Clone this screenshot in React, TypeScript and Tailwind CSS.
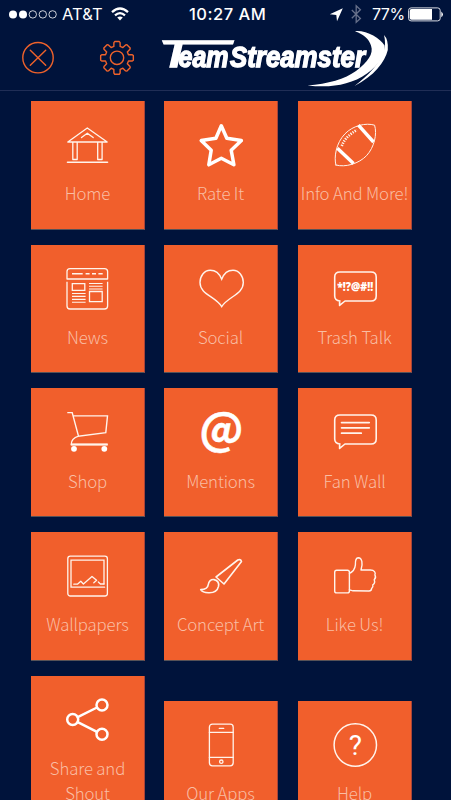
import type { ReactNode } from 'react';

const GLYPH_FONT = "'Noto Sans CJK JP','Noto Sans CJK SC','Open Sans',sans-serif";

const GEAR_TEETH = 8;

function gearPath(cx: number, cy: number) {
  const pts: string[] = [];
  for (let i = 0; i < GEAR_TEETH; i++) {
    const mid = (i * 2 * Math.PI) / GEAR_TEETH - Math.PI / 2;
    const corners = [
      [11.9, -0.27],
      [15.6, -0.2],
      [16.5, -0.14],
      [16.5, 0.14],
      [15.6, 0.2],
      [11.9, 0.27],
    ];
    corners.forEach(([r, d]) => {
      pts.push(`${(cx + r * Math.cos(mid + d)).toFixed(2)} ${(cy + r * Math.sin(mid + d)).toFixed(2)}`);
    });
  }
  return `M${pts.join('L')}Z`;
}

function Icon({ children, width = 1.4 }: { children: ReactNode; width?: number }) {
  return (
    <svg
      className="ml-[33px] block h-12 w-12 shrink-0 overflow-visible"
      viewBox="0 0 48 48"
      fill="none"
      stroke="#fff4ec"
      strokeWidth={width}
      strokeLinejoin="round"
      strokeLinecap="round"
    >
      {children}
    </svg>
  );
}

const bubble =
  'M9 36C5.5 35.6 3.7 33.5 3.7 31V12Q3.7 7 9 7H40Q45.2 7 45.2 12V31Q45.2 36 40 36H14L8.6 40.4V36';

const home = (
  <Icon>
    <path d="M3.8 21 23.3 7 43.2 21ZM17.5 16.6l5.8-4.4 5.9 4.4M8.8 21.5v17h4.4v-17M33.7 21.5v17h4.4v-17" strokeWidth="1.3" />
    <path d="M3.5 41.2H43.5" strokeWidth="1.6" />
  </Icon>
);

const star = (
  <Icon width={3.5}>
    <path stroke="#fff" d="M24.3 4.8 29.8 17.2 44.4 19.6 34.2 29.3 36.9 43.8 24.3 37.3 11.8 43.8 14.2 29.3 4.2 19.6 18.9 17.2Z" />
  </Icon>
);

const football = (
  <Icon width={1}>
    <path d="M4.9 44C2.8 36 5 22 14 12.8 22 4.5 35 1.5 43.6 4.2 46.2 13 43.5 26 35.5 34.7 28 42.5 14.5 46.8 4.9 44Z" />
    <path d="M27.4 4.2 42.5 21M6.4 27.2 22.5 42.4" stroke="#fff" strokeWidth="3.4" strokeLinecap="butt" />
    <path d="M10.8 25Q14 15.5 26 9" strokeWidth="2.6" strokeDasharray="1.3 1.2" strokeLinecap="butt" />
  </Icon>
);

const news = (
  <Icon width={1.3}>
    <path d="M3 14V6.6Q3 3.6 6 3.6H40.5Q43.6 3.6 43.6 6.6V14ZM3 16.7V41Q3 44 6 44H40.5Q43.6 44 43.6 41V16.7" strokeLinecap="butt" />
    <path d="M8 8.8H18.7M21.6 8.8H25.6M28 8.8H32M34.4 8.8H38.7" strokeWidth="1.4" strokeLinecap="butt" />
    <path d="M8.3 18.7H20.8V25.4H8.3ZM25.5 26.5H38.2V36.7H25.5Z" strokeLinejoin="miter" />
    <path d="M25 18.5H38.6M25 21.3H38.6M25 24H38.6M8 28.5H21.6M8 31.4H21.6M8 34.4H21.6M8 37.3H21.6" strokeWidth="1.1" strokeLinecap="butt" />
  </Icon>
);

const heart = (
  <Icon>
    <path
      strokeLinejoin="miter"
      d="M24.7 14.2C22.5 8.7 18 5.3 13.2 5.3 7.2 5.3 3 11 3 17.6 3 29.5 18.5 31.5 24.7 41.6 31 31.5 46.3 29.5 46.3 17.6 46.3 11 42 5.3 36 5.3 31.3 5.3 26.8 8.7 24.7 14.2Z"
    />
  </Icon>
);

const trash = (
  <Icon width={1.6}>
    <path d={bubble} />
    <text x="6.2" y="25.6" textLength="36" lengthAdjust="spacingAndGlyphs" fontSize="12" fontWeight="800" fill="#fff" stroke="none" fontFamily="'Open Sans',sans-serif">
      *!?@#!!
    </text>
  </Icon>
);

const cart = (
  <Icon width={1.4}>
    <path d="M3.3 4.6H8.2L14.5 28.2 41.8 24.6 43.5 7.9H9.2M14.5 28.2C10.5 29.5 7.2 32.5 7.2 36.5H43.6" strokeLinejoin="miter" strokeLinecap="butt" />
    <path d="M7 36.5H43.7" strokeWidth="1.8" strokeLinecap="butt" />
    <circle cx="10" cy="40.8" r="2.9" fill="#fff" stroke="none" />
    <circle cx="40.3" cy="40.8" r="2.9" fill="#fff" stroke="none" />
  </Icon>
);

const mention = (
  <Icon>
    <text x="24.5" y="37.3" textAnchor="middle" fontSize="43.5" fontWeight="700" fill="#fff" stroke="#fff" strokeWidth="0.5" fontFamily={GLYPH_FONT}>
      @
    </text>
  </Icon>
);

const fanWall = (
  <Icon width={1.6}>
    <path d={bubble} />
    <path d="M10.6 14.6H38.2M10.6 19.8H38.2M10.6 25.2H30.2" strokeWidth="1.8" />
  </Icon>
);

const wallpaper = (
  <Icon width={1.3}>
    <rect x="3.8" y="4.2" width="39.6" height="39.8" rx="2.5" />
    <path d="M40 32V8.2H7V35.2H40.6" strokeLinejoin="miter" />
    <path d="M9.8 32.2H13.4L16.8 29.2 19.4 32 28 24.4 32.6 28.3 29.8 30.8M34.3 30 36.4 32H40" />
  </Icon>
);

const brush = (
  <Icon width={1.6}>
    <path d="M19 25 40.8 8Q43.8 6.8 44.5 9.6L27 32Z" />
    <path d="M3.7 37.6C9.5 37.5 11 35.5 11.3 32.5 11.7 29 14 27.2 17 27.6 20.7 28.5 22.2 31 21.5 34.4 20.3 39.5 16 41 11.5 40.8 8 40.6 5 39.8 3.7 37.6Z" />
  </Icon>
);

const like = (
  <Icon>
    <rect x="3.7" y="18.3" width="14.7" height="22.6" rx="2" />
    <path d="M18.4 21.3C22.5 19.5 24 16.5 24.4 12.8 24.2 8 25 5.8 27.2 5.7 31 5.8 32.2 11.5 30 18H39.5C43.3 18 45 20.6 43.9 22.8 45 24.8 44.3 26.8 43.2 27.8 44 29.8 43.2 32 41.8 32.8 42.3 34.5 41.5 35.8 40.6 36.6 40.5 38.3 39.8 39 38 39L22 38.8 18.4 37.8" />
  </Icon>
);

const share = (
  <Icon width={2.5}>
    <g stroke="#fff">
      <circle cx="38" cy="9" r="5.5" />
      <circle cx="8.7" cy="23.6" r="5.5" />
      <circle cx="38" cy="38.3" r="5.5" />
      <path d="M13.7 21.1 33 11.5M13.7 26.1 33 35.8" />
    </g>
  </Icon>
);

const phone = (
  <Icon width={1.3}>
    <rect x="12.4" y="3.2" width="23.8" height="41.6" rx="3" />
    <path d="M12.4 11.4H36.2M12.4 36.4H36.2M22.3 7.4H26.7" />
    <circle cx="24.3" cy="40.7" r="1.7" />
  </Icon>
);

const help = (
  <Icon width={1.5}>
    <circle cx="24.3" cy="24" r="21.2" />
    <text x="24.3" y="34" textAnchor="middle" fontSize="28" fontWeight="400" fill="#fff" stroke="none" fontFamily="Roboto,sans-serif">
      ?
    </text>
  </Icon>
);

const tiles: { label: string; icon: ReactNode }[] = [
  { label: 'Home', icon: home },
  { label: 'Rate It', icon: star },
  { label: 'Info And More!', icon: football },
  { label: 'News', icon: news },
  { label: 'Social', icon: heart },
  { label: 'Trash Talk', icon: trash },
  { label: 'Shop', icon: cart },
  { label: 'Mentions', icon: mention },
  { label: 'Fan Wall', icon: fanWall },
  { label: 'Wallpapers', icon: wallpaper },
  { label: 'Concept Art', icon: brush },
  { label: 'Like Us!', icon: like },
  { label: 'Share and Shout', icon: share },
  { label: 'Our Apps', icon: phone },
  { label: 'Help', icon: help },
];

function StatusBar() {
  return (
    <div className="flex h-7 items-center pl-[9px] font-['Inter','Liberation_Sans',sans-serif] text-[16px] leading-7 text-white">
      <svg className="h-7 w-[50px] shrink-0" viewBox="0 0 50 28" fill="none" stroke="#fff" strokeWidth="0.8">
        <circle cx="4" cy="14.4" r="4" fill="#fff" stroke="none" />
        <circle cx="14" cy="14.4" r="4" fill="#fff" stroke="none" />
        <circle cx="23.8" cy="14.4" r="3.7" />
        <circle cx="33.8" cy="14.4" r="3.7" />
        <circle cx="43.6" cy="14.4" r="3.7" />
      </svg>
      <span className="ml-[3px] w-[41px] whitespace-nowrap text-[16.5px] tracking-[0.1px]">AT&amp;T</span>
      <svg className="ml-[8px] h-7 w-[18px] shrink-0" viewBox="0 0 18 28" fill="none" stroke="#fff" strokeWidth="2.3">
        <path d="M1 12.1Q9 4.9 17 12.1M4 15.3Q9 10.9 14 15.3" />
        <path d="M6.2 17.6Q9 15.4 11.8 17.6L9 20.6Z" fill="#fff" stroke="none" />
      </svg>
      <span className="ml-[60px] w-[78px] whitespace-nowrap text-[16.5px] font-medium tracking-[0.5px]">10:27 AM</span>
      <svg className="ml-[62px] h-7 w-[34px] shrink-0" viewBox="0 0 34 28" fill="none">
        <path d="M.8 14.3 13.8 8.2 8 21.2 7.3 15Z" fill="#fff" />
        <path d="M22.8 10 31.4 18.5 27.2 22.3V5.7L31.4 9.7 22.8 18.2" stroke="#66708a" strokeWidth="1.3" />
      </svg>
      <span className="ml-[9px] w-[35px] whitespace-nowrap tracking-[-0.5px]">77%</span>
      <svg className="ml-[1px] h-7 w-[36px] shrink-0" viewBox="0 0 36 28" fill="none">
        <rect x="0.6" y="7.9" width="31.6" height="13" rx="2.5" stroke="#d9dce4" strokeWidth="1" />
        <path d="M3.5 9H24V19.8H3.5Q1.7 19.8 1.7 18V11Q1.7 9 3.5 9Z" fill="#fff" />
        <path d="M33.3 11.6Q36.6 14.4 33.3 17.2Z" fill="#fff" />
      </svg>
    </div>
  );
}

function Logo() {
  return (
    <svg className="ml-[24px] h-[62px] w-[230px] shrink-0" viewBox="160 28 230 62" fill="#fff">
      <path d="M355 31.2C366 30 380 38 384.5 45.5 385.8 54 379 65 367 73.5 350 85.5 330 88 307.5 85.4 328 84 345 79 356 71 367.5 62 374 54 371 45.5 369 39 364 34.5 355 31.2Z" />
      <path d="M384 35Q388.5 39.5 387.8 50C385 62 374 76 354.5 86 368 76 381 62 384 50Q386 43 384 35Z" />
      <g
        className="drop-shadow-[0.8px_0.6px_0_#5d6b8e]"
        fontFamily="'Liberation Sans',sans-serif"
        fontWeight="700"
        fontStyle="italic"
        stroke="#fff"
        strokeWidth="1.3"
      >
        <path d="M161.8 40.3H234.5L233 44.6H182.6L177.2 67.8H169.2L174.6 44.6H163.6Z" stroke="none" />
        <text x="178.5" y="67.2" fontSize="29.5" textLength="50" lengthAdjust="spacingAndGlyphs">
          eam
        </text>
        <text x="230" y="67.2" fontSize="30" textLength="135" lengthAdjust="spacingAndGlyphs">
          Streamster
        </text>
      </g>
    </svg>
  );
}

export default function App() {
  return (
    <div className="h-[800px] w-[451px] overflow-hidden bg-[#00133b]">
      <StatusBar />
      <header className="flex h-[63px] border-b border-[#202e56] pl-[21px]">
        <svg className="h-[60px] w-[34px] shrink-0" viewBox="21 28 34 60" fill="none" stroke="#ee622b" strokeWidth="1.4" strokeLinecap="round">
          <circle cx="38" cy="57.7" r="15.2" />
          <path d="M30.3 50.2 45.7 65.3M45.7 50.2 30.3 65.3" />
        </svg>
        <svg className="ml-[43px] h-[60px] w-[38px] shrink-0" viewBox="98 28 38 60" fill="none" stroke="#ee622b" strokeWidth="1.4" strokeLinejoin="round">
          <path d={gearPath(117, 57.9)} />
          <circle cx="117" cy="57.8" r="6.7" />
        </svg>
        <Logo />
      </header>
      <main className="grid w-[412px] grid-cols-[133px_134px_114px] items-end gap-y-[15px] pl-[31px] pt-[10px]">
        {tiles.map(({ label, icon }) => (
          <button
            key={label}
            className="flex min-h-[128.7px] w-[114px] flex-col border-b border-r border-b-[#565257] border-r-[#a74439] bg-[#f15f2c] pb-[21.7px] pt-[20px]"
          >
            {icon}
            <span className="mt-[12.3px] block w-[113px] text-center font-['Noto_Sans_CJK_JP_Light','Noto_Sans_CJK_JP','Noto_Sans_CJK_SC',sans-serif] text-[16.8px] font-light leading-[25.3px] tracking-[-0.15px] text-[#f9bda3]">
              {label}
            </span>
          </button>
        ))}
      </main>
    </div>
  );
}
